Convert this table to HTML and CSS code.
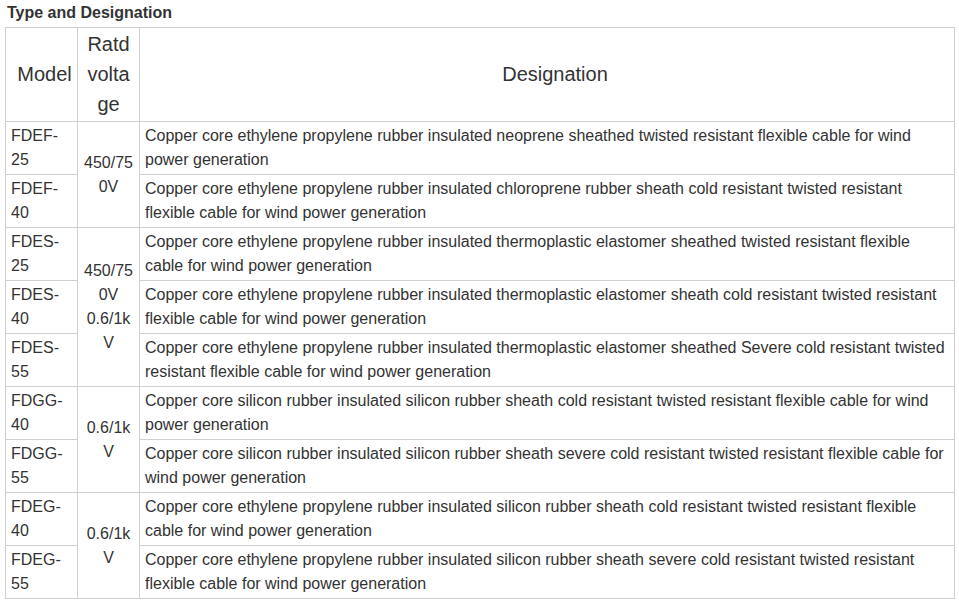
FILE: index.html
```html
<!DOCTYPE html>
<html lang="en">
<head>
<meta charset="utf-8">
<title>Type and Designation</title>
<link rel="stylesheet" href="styles.css">
</head>
<body>
<div class="page">
  <h2 class="title">Type and Designation</h2>
  <table class="spec">
    <colgroup>
      <col class="c-model">
      <col class="c-volt">
      <col class="c-desc">
    </colgroup>
    <thead>
      <tr>
        <th class="h-model">Model</th>
        <th class="volt">Ratd voltage</th>
        <th class="h-desc">Designation</th>
      </tr>
    </thead>
    <tbody>
      <tr>
        <td>FDEF-25</td>
        <td class="volt" rowspan="2">450/750V</td>
        <td>Copper core ethylene propylene rubber insulated neoprene sheathed twisted resistant flexible cable for wind power generation</td>
      </tr>
      <tr>
        <td>FDEF-40</td>
        <td>Copper core ethylene propylene rubber insulated chloroprene rubber sheath cold resistant twisted resistant flexible cable for wind power generation</td>
      </tr>
      <tr>
        <td>FDES-25</td>
        <td class="volt" rowspan="3">450/750V<br>0.6/1kV</td>
        <td>Copper core ethylene propylene rubber insulated thermoplastic elastomer sheathed twisted resistant flexible cable for wind power generation</td>
      </tr>
      <tr>
        <td>FDES-40</td>
        <td>Copper core ethylene propylene rubber insulated thermoplastic elastomer sheath cold resistant twisted resistant flexible cable for wind power generation</td>
      </tr>
      <tr>
        <td>FDES-55</td>
        <td>Copper core ethylene propylene rubber insulated thermoplastic elastomer sheathed Severe cold resistant twisted resistant flexible cable for wind power generation</td>
      </tr>
      <tr>
        <td>FDGG-40</td>
        <td class="volt" rowspan="2">0.6/1kV</td>
        <td>Copper core silicon rubber insulated silicon rubber sheath cold resistant twisted resistant flexible cable for wind power generation</td>
      </tr>
      <tr>
        <td>FDGG-55</td>
        <td>Copper core silicon rubber insulated silicon rubber sheath severe cold resistant twisted resistant flexible cable for wind power generation</td>
      </tr>
      <tr>
        <td>FDEG-40</td>
        <td class="volt" rowspan="2">0.6/1kV</td>
        <td>Copper core ethylene propylene rubber insulated silicon rubber sheath cold resistant twisted resistant flexible cable for wind power generation</td>
      </tr>
      <tr>
        <td>FDEG-55</td>
        <td>Copper core ethylene propylene rubber insulated silicon rubber sheath severe cold resistant twisted resistant flexible cable for wind power generation</td>
      </tr>
    </tbody>
  </table>
</div>
</body>
</html>
```
FILE: styles.css
```css
html, body {
  margin: 0;
  padding: 0;
  background: #fff;
}

.page {
  padding: 1px 5px 0 5px;
  font-family: "Liberation Sans", Arial, sans-serif;
  color: #333;
}

.title {
  margin: 0 0 2px 2px;
  font-size: 16px;
  line-height: 24px;
  font-weight: bold;
  color: #333;
}

.spec {
  border-collapse: collapse;
  table-layout: fixed;
  width: 949px;
}

.c-model { width: 72px; }
.c-volt { width: 62px; }
.c-desc { width: 815px; }

.spec th,
.spec td {
  border: 1px solid #d0d0d0;
  padding: 2px 5px;
  vertical-align: middle;
  text-align: left;
}

.spec th {
  font-size: 20px;
  line-height: 30px;
  font-weight: normal;
  text-align: center;
  padding: 1px 5px 2px;
}

.spec th.h-model {
  padding-left: 8px;
  padding-right: 2px;
}

.spec th.h-desc {
  padding-left: 21px;
  padding-right: 5px;
}

.spec td {
  font-size: 16px;
  line-height: 24px;
}

.spec .volt {
  text-align: center;
  word-break: break-all;
}
```
